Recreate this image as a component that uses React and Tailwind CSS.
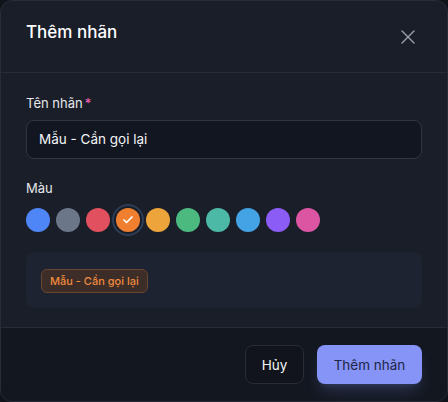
import { X, Check } from 'lucide-react'

const colors = [
  '#4f86f7',
  '#6b7689',
  '#e0505f',
  '#f0802f',
  '#eda43a',
  '#4cb97f',
  '#4cb8a6',
  '#44a3e4',
  '#8b5cf6',
  '#dc55a3',
]

export default function App() {
  const selected = 3
  return (
    <div className="h-[402px] w-[448px] bg-[#10131a]" style={{ fontFamily: 'Inter, "Noto Sans", sans-serif' }}>
      <div className="flex h-full flex-col overflow-hidden rounded-xl border border-[#272c38] bg-[#1a1e29]">
        {/* Header */}
        <div className="flex h-[72px] shrink-0 items-center justify-between border-b border-[#272c38] pl-[25px] pr-[27px]">
          <h2 className="-mt-2 text-[17px] font-medium text-white">Thêm nhãn</h2>
          <X className="h-6 w-6 text-gray-400" strokeWidth={1.4} />
        </div>

        {/* Body */}
        <div className="flex flex-col px-[25px] pt-[21px] pb-[19px]">
          <label className="mb-1.5 text-[13px] text-gray-200">
            Tên nhãn<span className="ml-0.5 text-pink-400">*</span>
          </label>
          <div className="flex h-[39px] items-center rounded-lg border border-[#2f3542] bg-[#121620] px-3 text-[13.5px] text-gray-100">
            Mẫu - Cần gọi lại
          </div>

          <label className="mt-5 mb-[10px] text-[13px] text-gray-200">Màu</label>
          <div className="flex gap-1.5">
            {colors.map((c, i) => (
              <div
                key={c}
                className={
                  i === selected
                    ? 'flex h-6 w-6 items-center justify-center rounded-full ring-2 ring-[#2c3e55] ring-offset-2 ring-offset-[#1a1e29]'
                    : 'h-6 w-6 rounded-full'
                }
                style={{ backgroundColor: c }}
              >
                {i === selected && <Check className="h-3 w-3 text-white" strokeWidth={3.5} />}
              </div>
            ))}
          </div>

          <div className="mt-5 rounded-lg bg-[#1e2331] p-[15px]">
            <span className="inline-flex h-6 items-center rounded-md border border-[#6a4530] bg-[#3c2d28] px-2 text-[11px] font-medium text-[#f08a3e]">
              Mẫu - Cần gọi lại
            </span>
          </div>
        </div>

        {/* Footer */}
        <div className="flex flex-1 items-start justify-end gap-[13px] border-t border-[#272c38] bg-[#131720] px-[25px] pt-[17px]">
          <button className="h-[39px] w-[59px] rounded-lg border border-[#272c38] bg-[#11141c] text-[13.5px] text-gray-100">
            Hủy
          </button>
          <button className="h-[39px] w-[105px] rounded-lg bg-[#8594f6] text-[13.5px] text-[#1e2547] shadow-lg shadow-[#8594f6]/20">
            Thêm nhãn
          </button>
        </div>
      </div>
    </div>
  )
}
